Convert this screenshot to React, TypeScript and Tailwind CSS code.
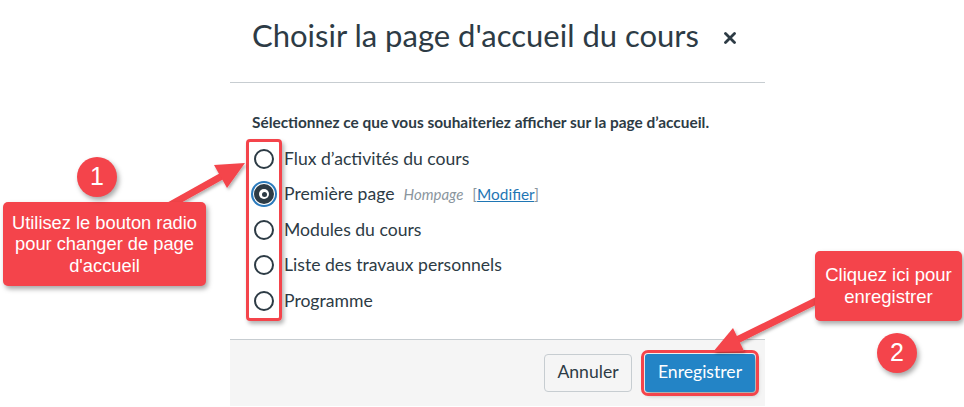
import React from "react";

const RED = "#f4444b";

function Radio({ checked }: { checked?: boolean }) {
  if (checked) {
    return (
      <span className="ml-[2px] flex h-[20px] w-[20px] shrink-0 items-center justify-center rounded-full bg-[#2d3b45] shadow-[0_0_0_1px_white,0_0_0_3px_#2b7abc]">
        <span className="flex h-[10px] w-[10px] items-center justify-center rounded-full bg-white">
          <span className="h-[5px] w-[5px] rounded-full bg-[#2d3b45]" />
        </span>
      </span>
    );
  }
  return <span className="ml-[2px] h-[20px] w-[20px] shrink-0 rounded-full border-2 border-[#2d3b45]" />;
}

function Row({ children, checked }: { children: React.ReactNode; checked?: boolean }) {
  return (
    <div className="flex h-[35.5px] items-center">
      <Radio checked={checked} />
      <span className="ml-[10px] flex items-baseline text-[17.6px] leading-none">{children}</span>
    </div>
  );
}

export default function App() {
  return (
    <div className="relative h-[407px] w-[964px] overflow-hidden bg-white">
      {/* Dialog */}
      <div className="ml-[230px] w-[535px] font-['Lato',sans-serif] text-[#2d3b45]">
        <div className="flex h-[83px] items-start gap-[25px] border-b border-[#c7cdd1] pl-[22px] pt-[20px]">
          <h2 className="text-[31px] font-normal leading-none">Choisir la page d'accueil du cours</h2>
          <svg width="12" height="12" viewBox="0 0 12 12" className="mt-[12px]">
            <path d="M1.5 1.5 L10.5 10.5 M10.5 1.5 L1.5 10.5" stroke="#2d3b45" strokeWidth="2.8" strokeLinecap="round" />
          </svg>
        </div>
        <div className="pb-[20px] pl-[22px] pt-[29px]">
          <p className="text-[15.4px] font-bold leading-[20px]">
            Sélectionnez ce que vous souhaiteriez afficher sur la page d’accueil.
          </p>
          <div className="mt-[9px]">
            <Row>Flux d’activités du cours</Row>
            <Row checked>
              Première page
              <span className="ml-[9px] text-[15px] italic text-[#8b969e]">Hompage</span>
              <span className="ml-[9px] text-[15.4px] text-[#8b969e]">
                [<span className="text-[#1f76b4] underline">Modifier</span>]
              </span>
            </Row>
            <Row>Modules du cours</Row>
            <Row>Liste des travaux personnels</Row>
            <Row>Programme</Row>
          </div>
        </div>
        <div className="flex h-[67px] items-start justify-end gap-[13px] border-t border-[#c7cdd1] bg-[#f5f5f5] pr-[10px] pt-[14px]">
          <button className="h-[38px] w-[88px] rounded-[4px] border border-[#c7cdd1] bg-[#f5f5f5] text-[17.6px] text-[#2d3b45]">
            Annuler
          </button>
          <button className="h-[38px] w-[110px] rounded-[3px] bg-[#2384c6] text-[17.6px] text-white outline-[3px] outline-offset-[1px] outline-[#f4444b] outline shadow-[2px_3px_5px_rgba(0,0,0,0.35)]">
            Enregistrer
          </button>
        </div>
      </div>

      {/* Red box around radios */}
      <div className="absolute left-[246px] top-[139px] h-[182px] w-[36px] rounded-[4px] border-[3px] border-[#f4444b] shadow-[2px_3px_4px_rgba(0,0,0,0.3)]" />

      {/* Arrows */}
      <svg className="pointer-events-none absolute left-0 top-0" width="964" height="407" viewBox="0 0 964 407">
        <defs>
          <filter id="sh" x="-20%" y="-20%" width="140%" height="140%">
            <feDropShadow dx="1.5" dy="2" stdDeviation="1.5" floodColor="#000" floodOpacity="0.3" />
          </filter>
        </defs>
        <g fill={RED} stroke="none" filter="url(#sh)">
          <line x1="163" y1="209" x2="222" y2="176" stroke={RED} strokeWidth="7" />
          <polygon points="245,163 227,188 214,165" />
          <line x1="824" y1="297" x2="737" y2="340" stroke={RED} strokeWidth="7" />
          <polygon points="713,352 733,328 744,351" />
        </g>
      </svg>

      {/* Callout 1 */}
      <div className="absolute left-[3px] top-[202px] flex h-[84px] w-[203px] flex-col items-center justify-center rounded-[5px] bg-[#f4444b] font-['Liberation_Sans',Arial,sans-serif] text-[18.3px] leading-[21.5px] text-white shadow-[2px_3px_5px_rgba(0,0,0,0.35)]">
        <span>Utilisez le bouton radio</span>
        <span>pour changer de page</span>
        <span>d'accueil</span>
      </div>
      <div className="absolute left-[77px] top-[157px] flex h-[40px] w-[40px] items-center justify-center rounded-full bg-[#f4444b] font-['Liberation_Sans',Arial,sans-serif] text-[25px] text-white shadow-[2px_3px_5px_rgba(0,0,0,0.35)]">
        1
      </div>

      {/* Callout 2 */}
      <div className="absolute left-[815px] top-[251px] flex h-[70px] w-[147px] flex-col items-center justify-center rounded-[5px] bg-[#f4444b] font-['Liberation_Sans',Arial,sans-serif] text-[18.5px] leading-[22px] text-white shadow-[2px_3px_5px_rgba(0,0,0,0.35)]">
        <span>Cliquez ici pour</span>
        <span>enregistrer</span>
      </div>
      <div className="absolute left-[877px] top-[333px] flex h-[40px] w-[40px] items-center justify-center rounded-full bg-[#f4444b] font-['Liberation_Sans',Arial,sans-serif] text-[25px] text-white shadow-[2px_3px_5px_rgba(0,0,0,0.35)]">
        2
      </div>
    </div>
  );
}
